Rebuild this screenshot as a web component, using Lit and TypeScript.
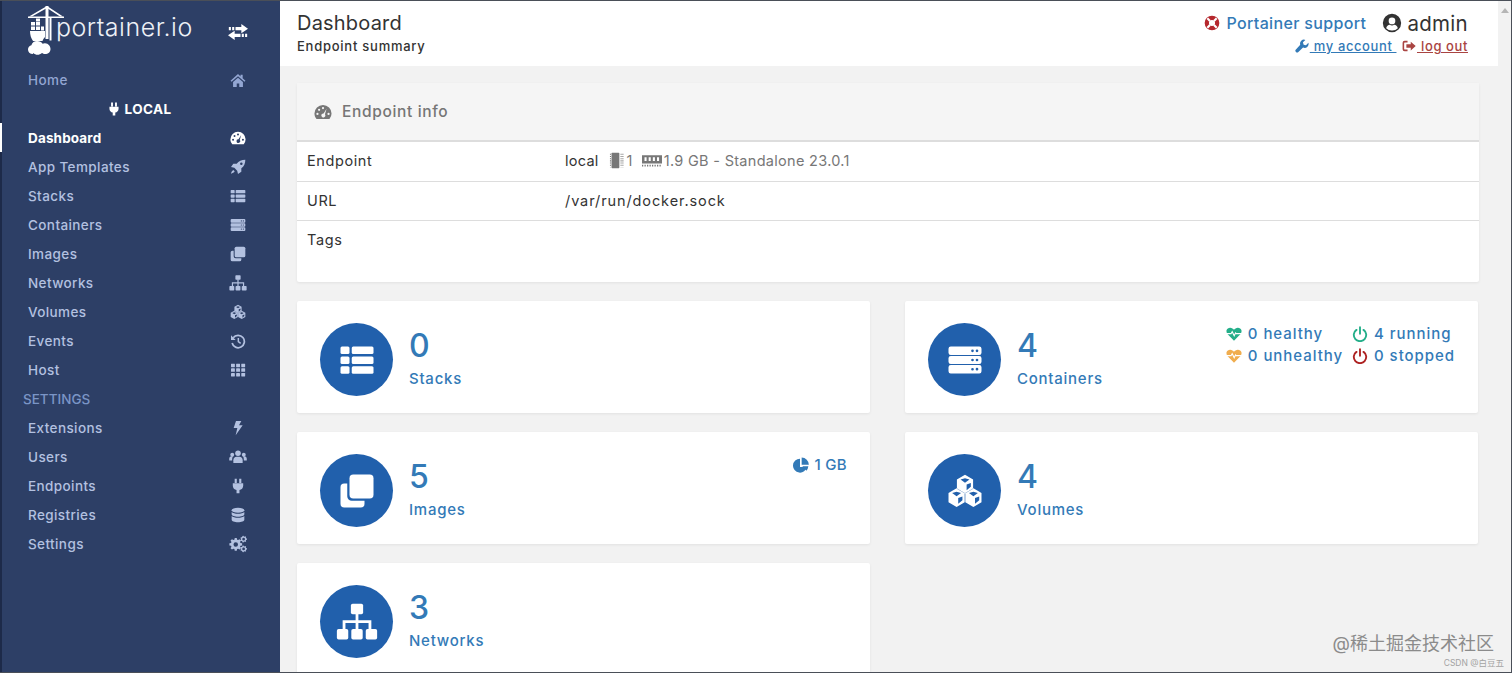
import { LitElement, html, css, svg } from 'lit';
import { customElement } from 'lit/decorators.js';

// round hole for evenodd paths
const dot = (x: number, y: number, r: number) =>
  `M${x - r} ${y}a${r} ${r} 0 1 0 ${2 * r} 0a${r} ${r} 0 1 0 ${-2 * r} 0z`;

const gear = (cx: number, cy: number, r: number, hole: number, teeth: number) => {
  const pts: string[] = [];
  const step = (Math.PI * 2) / teeth;
  for (let i = 0; i < teeth; i++) {
    const a = i * step;
    [
      [a - step * 0.36, r * 0.76],
      [a - step * 0.2, r],
      [a + step * 0.2, r],
      [a + step * 0.36, r * 0.76],
    ].forEach(([t, d]) => {
      pts.push(`${(cx + Math.cos(t) * d).toFixed(2)} ${(cy + Math.sin(t) * d).toFixed(2)}`);
    });
  }
  return `M${pts.join('L')}z${dot(cx, cy, hole)}`;
};

const cube = (cx: number, cy: number, s: number) => {
  const w = s * 0.87;
  const h = s / 2;
  return (
    `M${cx} ${cy - s}L${cx + w} ${cy - h}V${cy + h}L${cx} ${cy + s}L${cx - w} ${cy + h}V${cy - h}z` +
    `M${cx} ${cy - s * 0.62}L${cx - w * 0.55} ${cy - h * 0.98}L${cx} ${cy - h * 0.3}L${cx + w * 0.55} ${cy - h * 0.98}z` +
    `M${cx + w * 0.2} ${cy + h * 0.1}V${cy + s * 0.66}L${cx + w * 0.72} ${cy + h * 0.55}V${cy - h * 0.25}z`
  );
};

const rows = (x: number, w: number) =>
  [3, 9.6, 16.2].map((y) => svg`<rect x=${x} y=${y} width=${w} height="5" rx="1"/>`);

const icons: Record<string, unknown> = {
  home: svg`<path d="M12 3 .8 13l1.5 1.7L12 6.3l9.7 8.4 1.5-1.7-4.2-3.7V4h-3.2v2.8zM4.6 15v7.4h5.5v-5.2h3.8v5.2h5.5V15L12 8.6z"/>`,
  tachometer: svg`<path fill-rule="evenodd" d="M12 2.6A11.4 11.4 0 0 0 .6 14c0 2.9 1 5.4 2.8 7.4h17.2A11.3 11.3 0 0 0 23.4 14 11.4 11.4 0 0 0 12 2.6z${dot(4.6, 14.5, 1.5)}${dot(6.8, 9, 1.5)}${dot(12, 6.8, 1.5)}${dot(19.4, 14.5, 1.5)}M16.8 7.6l-4 6.4a2.7 2.7 0 1 0 1.8 1z"/>`,
  rocket: svg`<path fill-rule="evenodd" d="M23 1c-5.5 0-10 2-13 6H5L1.5 12l5 1.2 4.3 4.3L12 22.500l5-3.500v-5c4-3 6-7.500 6-13z${dot(17, 7, 1.9)}"/><path d="M5 16.500c-2 1-3 3.300-3.500 5.500 2.200-.5 4.500-1.500 5.500-3.500z"/>`,
  list: svg`${rows(1, 6)}${rows(8.5, 14.5)}`,
  server: svg`<path fill-rule="evenodd" d="M2.500 3h19A1.500 1.500 0 0 1 23 4.500v2.700a1.500 1.500 0 0 1-1.500 1.500h-19A1.500 1.500 0 0 1 1 7.200V4.500A1.500 1.500 0 0 1 2.500 3z${dot(17, 5.85, 0.9)}${dot(20, 5.85, 0.9)}M2.500 9.400h19a1.500 1.500 0 0 1 1.500 1.500v2.200a1.500 1.500 0 0 1-1.500 1.500h-19A1.500 1.500 0 0 1 1 13.100v-2.200a1.500 1.500 0 0 1 1.500-1.500z${dot(17, 12, 0.9)}${dot(20, 12, 0.9)}M2.500 15.300h19a1.500 1.500 0 0 1 1.500 1.500v2.700a1.500 1.500 0 0 1-1.500 1.500h-19A1.500 1.500 0 0 1 1 19.500v-2.700a1.500 1.500 0 0 1 1.500-1.500z${dot(17, 18.150, 0.9)}${dot(20, 18.150, 0.9)}"/>`,
  clone: svg`<path d="M1 9.500A2.500 2.500 0 0 1 3.500 7H5.500v8.500a3 3 0 0 0 3 3H17v2A2.500 2.500 0 0 1 14.500 23h-11A2.500 2.500 0 0 1 1 20.500z"/><rect x="7" y="1" width="16" height="16" rx="2.500"/>`,
  sitemap: svg`<rect x="8.500" y="1.500" width="7" height="6" rx="1"/><rect x=".5" y="16" width="6.500" height="6" rx="1"/><rect x="8.750" y="16" width="6.500" height="6" rx="1"/><rect x="17" y="16" width="6.500" height="6" rx="1"/><path d="M11.200 7h1.600v4h7.400v5h-1.600v-3.400h-5.800V16h-1.600v-3.400H5.400V16H3.800v-5h7.400z"/>`,
  cubes: svg`<path fill-rule="evenodd" d="${cube(12, 7.4, 6.2)}${cube(6.4, 16.4, 6.2)}${cube(17.6, 16.4, 6.2)}"/>`,
  history: svg`<path fill="none" stroke="currentColor" stroke-width="2.600" d="M4.800 7.200A9.300 9.300 0 1 1 3.200 15"/><path d="M1.500 3.500V10.500H8.500z"/><path fill="none" stroke="currentColor" stroke-width="2.200" d="M12.500 7.500V13l3.500 2.500"/>`,
  th: svg`${[2.500, 9.500, 16.500].map((y) => [1.500, 9.200, 16.900].map((x) => svg`<rect x=${x} y=${y} width="5.800" height="5.200" rx=".6"/>`))}`,
  bolt: svg`<path d="M9 1.500h8l-3.500 6.500H19L8.500 23l2.500-11H5.500z"/>`,
  users: svg`<circle cx="12" cy="7" r="3.700"/><circle cx="4.300" cy="9" r="2.600"/><circle cx="19.700" cy="9" r="2.600"/><path d="M5.800 20v-3.600c0-3 1.800-4.800 4.200-4.800h4c2.400 0 4.200 1.800 4.200 4.800V20z"/><path d="M.3 16.500v-2.300c0-1.900 1.300-3.200 3.200-3.200h2c-1 1.100-1.300 2.700-1.300 5.500zM23.700 16.500v-2.300c0-1.900-1.300-3.200-3.200-3.200h-2c1 1.100 1.300 2.700 1.300 5.500z"/>`,
  plug: svg`<path d="M7 1h3.200v6.500H7zM13.800 1H17v6.500h-3.200zM4.200 8h15.600v3.500c0 3.500-2.500 6-5.600 6.600V23H9.800v-4.900c-3.100-.6-5.600-3.100-5.600-6.600z"/>`,
  database: svg`<ellipse cx="12" cy="5" rx="9.500" ry="3.800"/><path d="M2.500 7.400C4 9.300 8 10 12 10s8-.7 9.500-2.600V11c0 2.100-4.300 3.700-9.500 3.700S2.500 13.100 2.500 11zM2.500 13.400C4 15.300 8 16 12 16s8-.7 9.500-2.600V19c0 2.100-4.300 3.800-9.500 3.800S2.500 21.100 2.500 19z"/>`,
  cogs: svg`<path fill-rule="evenodd" d="${gear(9, 12.500, 8.600, 3, 8)}${gear(19.500, 5.500, 4.500, 1.800, 7)}${gear(19.500, 18.500, 4.500, 1.800, 7)}"/>`,
  exchange: svg`<path d="M16 2.500 24 8l-8 5.500V10H9V6h7zM8 10.500V14h7v4H8v3.500L0 16z"/><path d="M1 6h2.500v4H1zM5 6h2.500v4H5zM16.500 14H19v4h-2.500zM20.500 14H23v4h-2.500z"/>`,
  lifering: svg`<circle cx="12" cy="12" r="7.800" fill="none" stroke="currentColor" stroke-width="6.400"/><path fill="none" stroke="#fff" stroke-width="3.200" d="M5 5l4 4M19 5l-4 4M5 19l4-4M19 19l-4-4"/>`,
  usercircle: svg`<path fill-rule="evenodd" d="M12 1a11 11 0 1 0 0 22 11 11 0 0 0 0-22z${dot(12, 9.500, 4)}M5 18.400c.6-2.700 2.300-4.300 4.300-4.300.8.500 1.700.9 2.700.9s1.900-.4 2.700-.9c2 0 3.700 1.600 4.300 4.300A9.300 9.300 0 0 1 12 21a9.300 9.300 0 0 1-7-2.600z"/>`,
  wrench: svg`<path d="M23 6.500l-4.200 4.200-4-1-1.200-4L17.800 1.500a6.800 6.800 0 0 0-8.800 8.500L1.600 18a2.900 2.900 0 0 0 4.200 4.200l8-7.500A6.800 6.800 0 0 0 23 6.500z"/>`,
  signout: svg`<path d="M9.500 3H4.500A3.500 3.500 0 0 0 1 6.500v11A3.500 3.500 0 0 0 4.500 21h5v-3.200h-5a.8.8 0 0 1-.8-.8V7a.8.8 0 0 1 .8-.8h5z"/><path d="M15 4.500v4.500H7.500v6H15v4.500l8.500-7.500z"/>`,
  chip: svg`<rect x="5" y="1" width="11" height="22" rx="1"/><path fill="none" stroke="currentColor" stroke-width="1.500" stroke-dasharray="1.500 1.600" d="M18.500 2.500v19M21 2.500v19M3.500 2.500v19"/>`,
  memory: svg`<path fill-rule="evenodd" d="M0 5h24v10H0zM3 7.500v4.500h2.500V7.500zM8 7.500v4.500h2.500V7.500zM13 7.500v4.500h2.500V7.500zM18 7.500v4.500h2.500V7.500z"/><path fill="none" stroke="currentColor" stroke-width="2" stroke-dasharray="1.500 1.500" d="M0 17.500h24"/>`,
  pie: svg`<path d="M10.500 2.500a10.500 10.500 0 1 0 10.300 12.500H10.500z"/><path d="M13 .8v10.900h10.800A11 11 0 0 0 13 .8zM14 14l6 6.500a10 10 0 0 0 3-6.500z"/>`,
  heartbeat: svg`<path d="M12 22 2.500 12.500C-.5 9-.2 3 5.800 2.500c2.700-.2 4.800 1.300 6.200 3.200 1.400-1.900 3.500-3.400 6.200-3.200 6 .5 6.300 6.500 3.300 10z"/><path fill="none" stroke="#fff" stroke-width="1.700" d="M0 11.500h7.500l1.800-3 3 6 2-4 1 1H24"/>`,
  power: svg`<path fill="none" stroke="currentColor" stroke-width="2.800" stroke-linecap="round" d="M6.700 5.800a9.300 9.300 0 1 0 10.600 0M12 1.800v10"/>`,
};

const icon = (name: string, cls = '') =>
  html`<svg class="ico i-${name} ${cls}" viewBox="0 0 24 24" fill="currentColor">${icons[name]}</svg>`;

const nav = [
  { label: 'Home', icon: 'home', cls: 'dim' },
  { section: 'local' },
  { label: 'Dashboard', icon: 'tachometer', cls: 'active' },
  { label: 'App Templates', icon: 'rocket' },
  { label: 'Stacks', icon: 'list' },
  { label: 'Containers', icon: 'server' },
  { label: 'Images', icon: 'clone' },
  { label: 'Networks', icon: 'sitemap' },
  { label: 'Volumes', icon: 'cubes' },
  { label: 'Events', icon: 'history' },
  { label: 'Host', icon: 'th' },
  { section: 'settings' },
  { label: 'Extensions', icon: 'bolt' },
  { label: 'Users', icon: 'users' },
  { label: 'Endpoints', icon: 'plug' },
  { label: 'Registries', icon: 'database' },
  { label: 'Settings', icon: 'cogs' },
];

@customElement('app-root')
export class AppRoot extends LitElement {
  static styles = css`
    :host {
      display: flex;
      width: 1512px;
      height: 673px;
      overflow: hidden;
      position: relative;
      box-sizing: border-box;
      background: #f2f2f2;
      border-top: 1px solid #4a4f58;
      border-bottom: 1px solid #4a4f58;
      font-family: Inter, 'Noto Sans', sans-serif;
      color: #333;
    }

    .ico {
      display: block;
      width: 1em;
      height: 1em;
      flex: none;
    }

    /* sidebar */
    .side {
      width: 280px;
      flex: none;
      box-sizing: border-box;
      border-left: 2px solid #1d2a49;
      background: #2d3f66;
      color: #b3c1e0;
      font-size: 13.5px;
      font-weight: 500;
      letter-spacing: 0.4px;
    }
    .brand {
      height: 64px;
      display: flex;
      align-items: flex-start;
      padding-left: 26px;
      padding-right: 32px;
      color: #fff;
    }
    .logo {
      width: 36px;
      height: 50px;
      margin-top: 4px;
      flex: none;
    }
    .wordmark {
      font-size: 25px;
      font-weight: 300;
      letter-spacing: 0.5px;
      line-height: 27px;
      margin: 13px 0 0 -8px;
      color: #eef1f7;
    }
    .swap {
      margin-left: auto;
      margin-top: 21px;
      width: 20px;
      font-size: 20px;
    }
    .row {
      height: 29px;
      display: flex;
      align-items: center;
      justify-content: space-between;
      padding: 0 32px 0 26px;
    }
    .row .ico {
      font-size: 16px;
      width: 20px;
    }
    .row .i-sitemap,
    .row .i-users,
    .row .i-cogs {
      height: 18px;
    }
    .row.dim {
      color: #93a6d2;
    }
    .row.active {
      margin-left: -2px;
      padding-left: 26px;
      border-left: 2px solid #fff;
      color: #fff;
      font-weight: 700;
      letter-spacing: 0.15px;
    }
    .local {
      height: 29px;
      display: flex;
      align-items: center;
      justify-content: center;
      gap: 4px;
      padding-right: 4px;
      color: #fff;
      font-weight: 700;
    }
    .local .ico {
      font-size: 14px;
    }
    .section {
      height: 29px;
      display: flex;
      align-items: center;
      padding-left: 21px;
      color: #7b95c6;
      font-size: 13.5px;
      font-weight: 500;
      letter-spacing: 0;
    }

    /* page */
    .main {
      flex: 1;
      min-width: 0;
      overflow: hidden;
    }
    .top {
      height: 65px;
      background: #fff;
      display: flex;
      justify-content: space-between;
      padding: 0 30px 0 17px;
    }
    .title {
      font-size: 20px;
      line-height: 24px;
      margin-top: 10px;
      letter-spacing: 0.2px;
    }
    .sub {
      font-size: 13px;
      line-height: 16px;
      margin-top: 3px;
      font-weight: 500;
      letter-spacing: 0.75px;
    }
    .who {
      text-align: right;
    }
    .who-top {
      display: flex;
      align-items: center;
      justify-content: flex-end;
      height: 24px;
      margin-top: 10px;
    }
    .support {
      display: flex;
      align-items: center;
      gap: 6px;
      color: #337ab7;
      font-size: 16px;
      font-weight: 500;
      letter-spacing: 0.35px;
    }
    .support .ico {
      font-size: 16px;
      color: #b5272d;
    }
    .admin {
      display: flex;
      align-items: center;
      gap: 5px;
      margin-left: 16px;
      font-size: 20.5px;
      letter-spacing: 0.3px;
    }
    .admin .ico {
      font-size: 20px;
    }
    .links {
      display: flex;
      justify-content: flex-end;
      gap: 5.5px;
      margin-top: 3px;
      font-size: 13px;
      line-height: 16px;
      font-weight: 500;
      letter-spacing: 0.6px;
    }
    .links span {
      display: flex;
      align-items: center;
      white-space: pre;
      color: #337ab7;
      text-decoration: underline;
    }
    .links span.out {
      color: #a94442;
    }
    .links .ico {
      font-size: 14px;
      margin-right: 1px;
    }

    .content {
      padding: 17px 19px 0 17px;
    }
    .card {
      background: #fff;
      box-shadow: 0 1px 3px rgba(0, 0, 0, 0.07);
      border-radius: 2px;
    }
    .info-head {
      height: 57px;
      display: flex;
      align-items: center;
      gap: 10px;
      padding-left: 17px;
      background: #f5f5f5;
      border-bottom: 1px solid #ddd;
      color: #767676;
      font-size: 15.5px;
      font-weight: 500;
      letter-spacing: 0.65px;
    }
    .info-head .ico {
      font-size: 18px;
    }
    .info-row {
      display: grid;
      grid-template-columns: 258px 1fr;
      height: 39px;
      padding: 9px 10px 0;
      box-sizing: border-box;
      border-top: 1px solid #ddd;
      font-size: 14.5px;
      line-height: 19px;
      letter-spacing: 0.6px;
    }
    .info-row.first {
      height: 40px;
    }
    .info-row.tags {
      height: 62px;
    }
    .path {
      letter-spacing: 0.9px;
    }
    .val {
      display: flex;
      align-items: center;
      height: 19px;
      white-space: pre;
      letter-spacing: 0.25px;
    }
    .muted {
      display: flex;
      align-items: center;
      color: #777;
      letter-spacing: 0.3px;
    }
    .muted .ico {
      font-size: 15px;
    }
    .muted .mem {
      font-size: 20px;
      margin-right: 2px;
    }
    .muted .chip {
      font-size: 17px;
      margin: 0 2px 0 9px;
    }
    .muted .one {
      margin-right: 9px;
    }

    .stats {
      display: grid;
      grid-template-columns: 573px 573px;
      grid-auto-rows: 112px;
      gap: 19px 35px;
      margin-top: 19px;
    }
    .stat {
      display: flex;
      padding: 22px 23px 0;
      color: #337ab7;
    }
    .disc {
      width: 73px;
      height: 73px;
      border-radius: 50%;
      background: #2160ac;
      color: #fff;
      display: flex;
      align-items: center;
      justify-content: center;
      font-size: 36px;
      flex: none;
    }
    .disc .i-sitemap {
      font-size: 42px;
    }
    .nums {
      margin-left: 16px;
    }
    .num {
      font-size: 32px;
      line-height: 46px;
      font-weight: 500;
    }
    .lab {
      font-size: 15px;
      line-height: 20px;
      font-weight: 500;
      letter-spacing: 0.75px;
    }
    .extra {
      margin-left: auto;
      font-size: 15px;
      font-weight: 500;
      letter-spacing: 0.3px;
      line-height: 22px;
    }
    .status {
      display: grid;
      grid-template-columns: auto auto;
      grid-auto-rows: 22px;
      align-content: start;
      column-gap: 9px;
      letter-spacing: 0.95px;
    }
    .status div,
    .size {
      display: flex;
      align-items: center;
      gap: 6px;
    }
    .extra .ico {
      font-size: 16px;
    }
    .good {
      color: #23ae89;
    }
    .warn {
      color: #f0ad4e;
    }
    .bad {
      color: #ae2222;
    }

    .scroll {
      width: 14px;
      flex: none;
      background: #f2f2f2;
      border-right: 1px solid #4a4f58;
      box-sizing: border-box;
    }
    .arrow {
      width: 0;
      height: 0;
      margin: 7px auto 0;
      border: 4px solid transparent;
      border-top: 0;
      border-bottom: 5px solid #b5b5b5;
    }

    /* watermark sits over the page */
    .mark {
      position: absolute;
      right: 18px;
      bottom: 17px;
      color: #8b8b8b;
      font-family: Inter, 'Noto Sans CJK SC', sans-serif;
      font-size: 18px;
      line-height: 22px;
    }
    .mark2 {
      position: absolute;
      right: 8px;
      bottom: 3px;
      color: #a3a3a3;
      font-family: Inter, 'Noto Sans CJK SC', sans-serif;
      font-size: 8.5px;
      line-height: 12px;
    }
  `;

  private logo() {
    return html`<svg class="logo" viewBox="0 0 36 50" fill="currentColor">
      <path d="M0 11.500h36v1.500H0z" />
      <path d="M17.500 1h3v33h-3z" />
      <path d="M21.500 12.500h2v23h-2z" />
      <path d="M19 1 1 11.500h3L19 3zM19 1l16 10.500h-3L19 3z" />
      <path d="M3 17h4v3.500H3zM8 17h4v3.500H8zM8 21.500h4V25H8zM3 21.500h4V25H3zM8 13.500h4v3H8zM13 21.500h3V25h-3zM13 26h3v-.5h-3z" />
      <path d="M2 26h15v6c-2 2-2.500 4-2.500 4H5c-2-3-3-6-3-10z" />
      <path d="M5 49c-3.200 0-5-2-5-4.500 0-2.300 1.500-4 3.400-4.300C4 37.500 6.500 36 9 36c2.500 0 4.500 1 5.600 2.800 .8-.4 1.800-.6 2.400-.5 3.500.3 5.500 2.900 5.500 5.700 0 3-2.200 5-5.500 5-1.100 0-2.300-.5-3-1-1.300 1-3 1.800-4.500 1.800-1.500 0-3-.6-4.500-1.800z" />
    </svg>`;
  }

  private stat(n: string, label: string, ic: string, extra: unknown = '') {
    return html`<div class="card stat">
      <div class="disc">${icon(ic)}</div>
      <div class="nums">
        <div class="num">${n}</div>
        <div class="lab">${label}</div>
      </div>
      ${extra}
    </div>`;
  }

  render() {
    return html`
      <aside class="side">
        <div class="brand">
          ${this.logo()}
          <div class="wordmark">portainer.io</div>
          <div class="swap">${icon('exchange')}</div>
        </div>
        ${nav.map((n) => {
          if (n.section === 'local') return html`<div class="local">${icon('plug')}LOCAL</div>`;
          if (n.section === 'settings') return html`<div class="section">SETTINGS</div>`;
          return html`<div class="row ${n.cls ?? ''}"><span>${n.label}</span>${icon(n.icon!)}</div>`;
        })}
      </aside>
      <div class="main">
        <header class="top">
          <div>
            <div class="title">Dashboard</div>
            <div class="sub">Endpoint summary</div>
          </div>
          <div class="who">
            <div class="who-top">
              <div class="support">${icon('lifering')}Portainer support</div>
              <div class="admin">${icon('usercircle')}admin</div>
            </div>
            <div class="links">
              <span>${icon('wrench')} my account </span>
              <span class="out">${icon('signout')} log out</span>
            </div>
          </div>
        </header>
        <div class="content">
          <section class="card">
            <div class="info-head">${icon('tachometer')}Endpoint info</div>
            <div class="info-row first">
              <span>Endpoint</span>
              <div class="val">local<span class="muted">${icon('chip', 'chip')}<span class="one">1</span>${icon('memory', 'mem')}1.9 GB - Standalone 23.0.1</span></div>
            </div>
            <div class="info-row"><span>URL</span><span class="path">/var/run/docker.sock</span></div>
            <div class="info-row tags"><span>Tags</span><span></span></div>
          </section>
          <div class="stats">
            ${this.stat('0', 'Stacks', 'list')}
            ${this.stat(
              '4',
              'Containers',
              'server',
              html`<div class="extra status">
                <div><span class="good">${icon('heartbeat')}</span>0 healthy</div>
                <div><span class="good">${icon('power')}</span>4 running</div>
                <div><span class="warn">${icon('heartbeat')}</span>0 unhealthy</div>
                <div><span class="bad">${icon('power')}</span>0 stopped</div>
              </div>`
            )}
            ${this.stat(
              '5',
              'Images',
              'clone',
              html`<div class="extra"><div class="size">${icon('pie')}1 GB</div></div>`
            )}
            ${this.stat('4', 'Volumes', 'cubes')}
            ${this.stat('3', 'Networks', 'sitemap')}
          </div>
        </div>
      </div>
      <div class="scroll"><div class="arrow"></div></div>
      <div class="mark">@稀土掘金技术社区</div>
      <div class="mark2">CSDN @白豆五</div>
    `;
  }
}
